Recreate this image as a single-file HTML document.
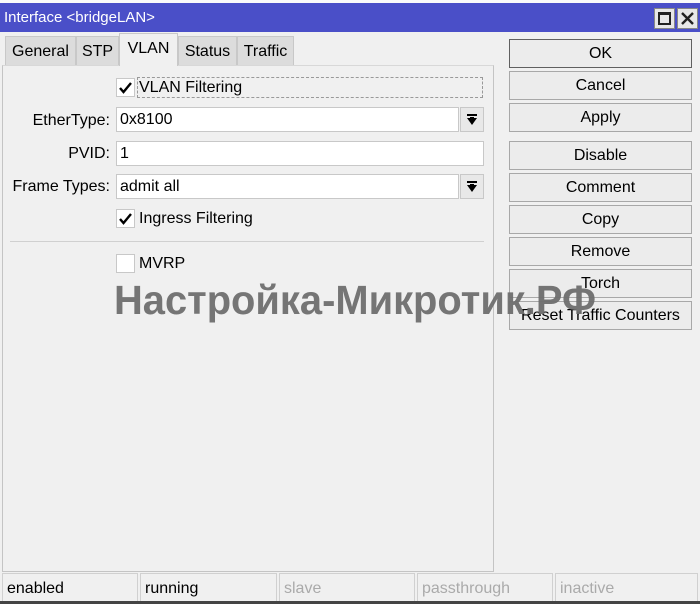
<!DOCTYPE html>
<html><head><meta charset="utf-8"><style>
*{box-sizing:border-box;margin:0;padding:0}
body{width:700px;height:604px;background:#f0f0f0;position:relative;overflow:hidden;font-family:"Liberation Sans",Arial,sans-serif;font-size:16px;color:#000}
.a{position:absolute}
.title{left:0;top:3px;width:700px;height:29px;background:#4a4fc8;color:#fff;font-size:15px;line-height:29px;padding-left:4px}
.tb{top:8px;width:21px;height:21px;background:#e8e8e8;border:1px solid #888}
.tab{top:36px;height:29px;background:#dcdcdc;border:1px solid #c8c8c8;border-bottom:none;text-align:center;line-height:29px;font-size:16px}
.tab.act{top:33px;height:33px;background:#f0f0f0;line-height:30px}
.panel{left:2px;top:65px;width:492px;height:507px;border:1px solid #c4c4c4;border-top:1px solid #d8d8d8}
.inp{background:#fff;border:1px solid #c8c8c8;height:25px;line-height:23px;padding-left:3px;font-size:16px}
.dd{width:24px;height:25px;border:1px solid #c8c8c8;background:#e8e8e8}
.lbl{text-align:right;width:110px;left:0;font-size:16px;line-height:25px}
.cb{width:19px;height:19px;background:#fff;border:1px solid #c8c8c8}
.btn{left:509px;width:183px;height:29px;border:1px solid #a8a8a8;background:#ececec;text-align:center;line-height:27px;font-size:16px}
.st{top:573px;height:29px;border:1px solid #d0d0d0;border-bottom:none;line-height:29px;padding-left:4px;font-size:16px}
</style></head><body>
<div class="a" style="left:0;top:0;width:700px;height:3px;background:#fafafa"></div>
<div class="a title">Interface &lt;bridgeLAN&gt;</div>
<div class="a tb" style="left:654px"><div class="a" style="left:3px;top:3px;width:13px;height:13px;border:2px solid #222;border-top-width:3px"></div></div>
<div class="a tb" style="left:677px"><svg class="a" style="left:3px;top:3px" width="13" height="13"><path d="M1 1L12 12M12 1L1 12" stroke="#222" stroke-width="2.4"/></svg></div>
<div class="a panel"></div>
<div class="a tab" style="left:5px;width:71px">General</div>
<div class="a tab" style="left:76px;width:43px">STP</div>
<div class="a tab act" style="left:119px;width:59px">VLAN</div>
<div class="a tab" style="left:178px;width:59px">Status</div>
<div class="a tab" style="left:237px;width:57px">Traffic</div>

<div class="a cb" style="left:116px;top:78px"><svg width="17" height="17"><path d="M3 9l3.5 4L14 4" stroke="#000" stroke-width="2.4" fill="none"/></svg></div>
<div class="a" style="left:137px;top:77px;width:346px;height:21px;border:1px dashed #999;line-height:19px;padding-left:1px">VLAN Filtering</div>

<div class="a lbl" style="top:108px">EtherType:</div>
<div class="a inp" style="left:116px;top:107px;width:343px">0x8100</div>
<div class="a dd" style="left:460px;top:107px"><svg width="22" height="23"><rect x="6" y="6" width="10" height="2" fill="#000"/><path d="M6 10h10l-5 7z" fill="#000"/><rect x="9" y="9" width="4" height="3" fill="#000"/></svg></div>

<div class="a lbl" style="top:141px">PVID:</div>
<div class="a inp" style="left:116px;top:141px;width:368px">1</div>

<div class="a lbl" style="top:174px">Frame Types:</div>
<div class="a inp" style="left:116px;top:174px;width:343px">admit all</div>
<div class="a dd" style="left:460px;top:174px"><svg width="22" height="23"><rect x="6" y="6" width="10" height="2" fill="#000"/><path d="M6 10h10l-5 7z" fill="#000"/><rect x="9" y="9" width="4" height="3" fill="#000"/></svg></div>

<div class="a cb" style="left:116px;top:209px"><svg width="17" height="17"><path d="M3 9l3.5 4L14 4" stroke="#000" stroke-width="2.4" fill="none"/></svg></div>
<div class="a" style="left:139px;top:209px;line-height:20px">Ingress Filtering</div>
<div class="a" style="left:10px;top:241px;width:474px;height:1px;background:#d0d0d0"></div>
<div class="a cb" style="left:116px;top:254px"></div>
<div class="a" style="left:139px;top:254px;line-height:20px">MVRP</div>

<div class="a btn" style="top:39px;border-color:#606060">OK</div>
<div class="a btn" style="top:71px">Cancel</div>
<div class="a btn" style="top:103px">Apply</div>
<div class="a btn" style="top:141px">Disable</div>
<div class="a btn" style="top:173px">Comment</div>
<div class="a btn" style="top:205px">Copy</div>
<div class="a btn" style="top:237px">Remove</div>
<div class="a btn" style="top:269px">Torch</div>
<div class="a btn" style="top:301px">Reset Traffic Counters</div>

<svg class="a" style="left:0;top:0" width="700" height="604"><text x="114" y="314" font-family="Liberation Sans, DejaVu Sans, sans-serif" font-weight="bold" font-size="41" fill="#6e6e6e" fill-opacity="0.95" textLength="482" lengthAdjust="spacingAndGlyphs">Настройка-Микротик.РФ</text></svg>

<div class="a st" style="left:2px;width:136px">enabled</div>
<div class="a st" style="left:140px;width:137px">running</div>
<div class="a st" style="left:279px;width:136px;color:#aaa">slave</div>
<div class="a st" style="left:417px;width:136px;color:#aaa">passthrough</div>
<div class="a st" style="left:555px;width:143px;color:#aaa">inactive</div>
<div class="a" style="left:0;top:601px;width:700px;height:3px;background:#444"></div>
</body></html>
